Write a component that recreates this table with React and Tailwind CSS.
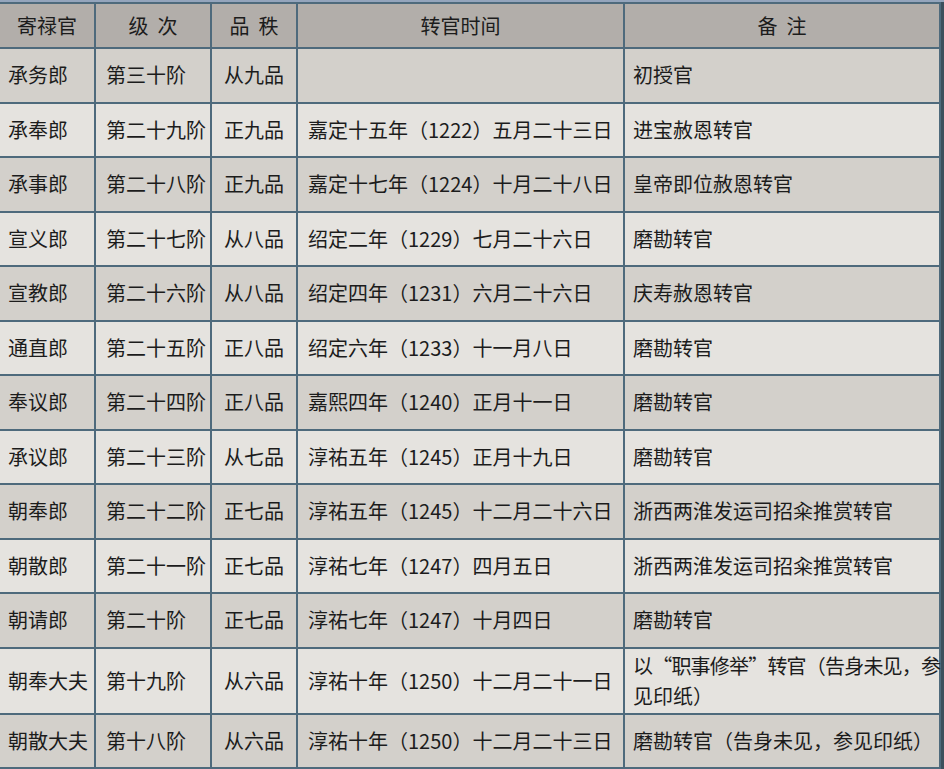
import React from "react";

const rows = [
  ["承务郎", "第三十阶", "从九品", "", "初授官"],
  ["承奉郎", "第二十九阶", "正九品", "嘉定十五年（1222）五月二十三日", "进宝赦恩转官"],
  ["承事郎", "第二十八阶", "正九品", "嘉定十七年（1224）十月二十八日", "皇帝即位赦恩转官"],
  ["宣义郎", "第二十七阶", "从八品", "绍定二年（1229）七月二十六日", "磨勘转官"],
  ["宣教郎", "第二十六阶", "从八品", "绍定四年（1231）六月二十六日", "庆寿赦恩转官"],
  ["通直郎", "第二十五阶", "正八品", "绍定六年（1233）十一月八日", "磨勘转官"],
  ["奉议郎", "第二十四阶", "正八品", "嘉熙四年（1240）正月十一日", "磨勘转官"],
  ["承议郎", "第二十三阶", "从七品", "淳祐五年（1245）正月十九日", "磨勘转官"],
  ["朝奉郎", "第二十二阶", "正七品", "淳祐五年（1245）十二月二十六日", "浙西两淮发运司招籴推赏转官"],
  ["朝散郎", "第二十一阶", "正七品", "淳祐七年（1247）四月五日", "浙西两淮发运司招籴推赏转官"],
  ["朝请郎", "第二十阶", "正七品", "淳祐七年（1247）十月四日", "磨勘转官"],
  ["朝奉大夫", "第十九阶", "从六品", "淳祐十年（1250）十二月二十一日", null],
  ["朝散大夫", "第十八阶", "从六品", "淳祐十年（1250）十二月二十三日", "磨勘转官（告身未见，参见印纸）"],
];

const heads = [["寄禄官"], ["级", "次"], ["品", "秩"], ["转官时间"], ["备", "注"]];

export default function App() {
  return (
    <div
      lang="zh-CN"
      className="w-[944px] h-[769px] bg-[#3c4f5c] text-[#1c1c1c] text-[20px] overflow-hidden"
      style={{ fontFamily: '"Noto Sans CJK SC", "Noto Sans", sans-serif' }}
    >
      <div className="h-[2px] bg-[#94a5bc]" />
      <div className="w-[941px] grid grid-cols-[94px_114px_84px_325px_314px] grid-rows-[43px_repeat(11,52.5px)_64px_52px] gap-[2px] bg-[#4e6a7c] py-[2px] pr-[2px]">
        {heads.map((h, i) => (
          <div key={i} className="bg-[#b2aeaa] flex items-center justify-center gap-[9px] leading-none">
            {h.map((t, j) => (
              <span key={j}>{t}</span>
            ))}
          </div>
        ))}
        {rows.map((r, ri) => {
          const bg = ri % 2 === 0 ? "bg-[#d3d0cb]" : "bg-[#e5e3df]";
          return (
            <React.Fragment key={ri}>
              <div className={`${bg} flex items-center pl-[8px] whitespace-nowrap`}>{r[0]}</div>
              <div className={`${bg} flex items-center pl-[10px] whitespace-nowrap`}>{r[1]}</div>
              <div className={`${bg} flex items-center justify-center whitespace-nowrap`}>{r[2]}</div>
              <div className={`${bg} flex items-center pl-[10px] whitespace-nowrap`}>{r[3]}</div>
              <div className={`${bg} flex items-center pl-[8px] whitespace-nowrap`}>
                {r[4] === null ? (
                  <div className="flex flex-col leading-[30px]">
                    <span className="tracking-[-0.8px]">以“职事修举”转官（告身未见，参</span>
                    <span>见印纸）</span>
                  </div>
                ) : (
                  <span>{r[4]}</span>
                )}
              </div>
            </React.Fragment>
          );
        })}
      </div>
    </div>
  );
}
